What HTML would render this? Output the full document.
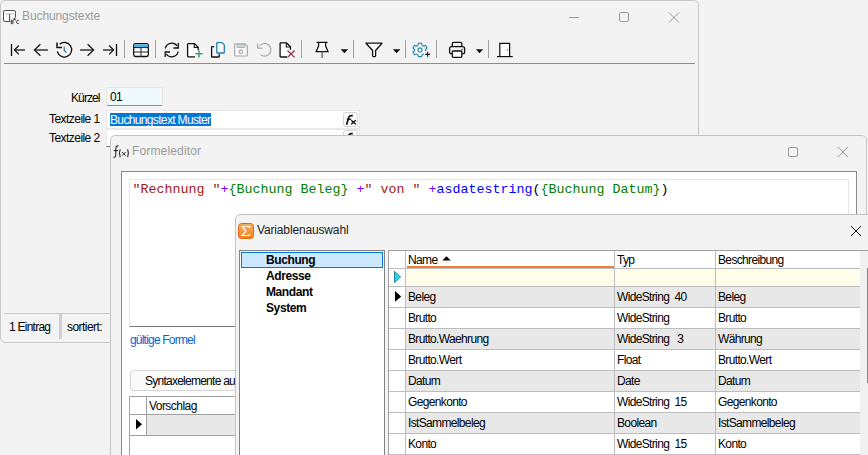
<!DOCTYPE html>
<html><head><meta charset="utf-8">
<style>
*{box-sizing:border-box;margin:0;padding:0}
html,body{width:868px;height:455px;overflow:hidden;background:#f3f3f3;font-family:"Liberation Sans",sans-serif;letter-spacing:-0.55px;color:#000;font-size:12px}
.a{position:absolute}
.t{position:absolute;white-space:pre;line-height:1}
svg{position:absolute;overflow:visible}
#w1{left:0;top:0;width:699px;height:343px;border:1px solid #c8c8c8;border-radius:5px;background:#f3f3f3}
#w2{left:110px;top:135px;width:757px;height:340px;border:1px solid #c4c4c4;border-radius:5px;background:#f3f3f3}
#w3{left:235px;top:214px;width:650px;height:260px;border:1px solid #c4c4c4;border-radius:5px;background:#f3f3f3}
</style></head><body>
<!-- Window 1: Buchungstexte -->
<div id="w1" class="a"></div>
<div class="t" style="left:22px;top:10px;font-size:12px;letter-spacing:-0.1px;color:#9a9a9a">Buchungstexte</div>
<!-- TOOLBAR -->
<svg style="left:0;top:0" width="700" height="70" viewBox="0 0 700 70">
<!-- window icon -->
<rect x="3.5" y="10.5" width="12" height="11" rx="1.5" fill="#fff" stroke="#505050" stroke-width="1"/>
<line x1="5" y1="14" x2="14" y2="14" stroke="#b8b8b8" stroke-width="1"/>
<line x1="9.5" y1="14" x2="9.5" y2="21" stroke="#505050" stroke-width="1"/>
<path d="M10.2 22 L10.2 25 L16.2 25 L16.2 17.6 L10.2 17.6 Z" fill="#f3f3f3"/>
<g fill="none" stroke="#333" stroke-width="0.9">
<path d="M11.2 20.3 L11.2 23.6 L12.4 23.6 Q13.3 23.6 13.3 22.8 Q13.3 22 12.3 22 L11.2 22 M11.2 20.3 L12.2 20.3 Q13 20.3 13 21.1 Q13 21.9 12.2 21.9"/>
<path d="M13.6 20.4 L14.5 17.8 L15.4 20.4 M13.9 19.6 L15.1 19.6"/>
<path d="M19.1 20.8 Q18.7 20.2 17.9 20.2 Q16.6 20.2 16.6 21.9 Q16.6 23.6 17.9 23.6 Q18.7 23.6 19.1 23"/>
</g>
<!-- title buttons -->
<line x1="569" y1="17.5" x2="579" y2="17.5" stroke="#9a9a9a" stroke-width="1"/>
<rect x="619.5" y="12.5" width="9" height="9" rx="1.5" fill="none" stroke="#9a9a9a" stroke-width="1"/>
<path d="M669 12.5 L679 22.5 M679 12.5 L669 22.5" stroke="#9a9a9a" stroke-width="1"/>
<!-- first -->
<line x1="11.5" y1="44" x2="11.5" y2="56" stroke="#111" stroke-width="1.3"/>
<line x1="15" y1="50" x2="25" y2="50" stroke="#555" stroke-width="1.8"/>
<path d="M18.8 45.5 L14.5 50 L18.8 54.3" fill="none" stroke="#111" stroke-width="1.2"/>
<!-- prev -->
<line x1="35" y1="50" x2="48" y2="50" stroke="#555" stroke-width="1.8"/>
<path d="M40.4 44.2 L34.4 50 L40.4 55.7" fill="none" stroke="#111" stroke-width="1.2"/>
<!-- history -->
<path d="M59.6 44.2 A7.3 7.3 0 1 1 57.3 51.5" fill="none" stroke="#111" stroke-width="1.3"/>
<path d="M57 42.6 L57 47.6 L62 47.6" fill="none" stroke="#111" stroke-width="1.5"/>
<path d="M64.2 46.4 L64.2 50.2 L66.4 52.6" fill="none" stroke="#2a6a90" stroke-width="1.2"/>
<!-- next -->
<line x1="80" y1="50" x2="93" y2="50" stroke="#555" stroke-width="1.8"/>
<path d="M87.6 44.2 L93.6 50 L87.6 55.7" fill="none" stroke="#111" stroke-width="1.2"/>
<!-- last -->
<line x1="103" y1="50" x2="113" y2="50" stroke="#555" stroke-width="1.8"/>
<path d="M109.2 45.5 L113.5 50 L109.2 54.3" fill="none" stroke="#111" stroke-width="1.2"/>
<line x1="116.5" y1="44" x2="116.5" y2="56" stroke="#111" stroke-width="1.3"/>
<!-- separators -->
<g stroke="#a0a0a0" stroke-width="1">
<line x1="124.5" y1="40" x2="124.5" y2="58"/>
<line x1="155.5" y1="40" x2="155.5" y2="58"/>
<line x1="301.5" y1="40" x2="301.5" y2="58"/>
<line x1="353.5" y1="40" x2="353.5" y2="58"/>
<line x1="405.5" y1="40" x2="405.5" y2="58"/>
<line x1="436.5" y1="40" x2="436.5" y2="58"/>
<line x1="488.5" y1="40" x2="488.5" y2="58"/>
</g>
<!-- table -->
<rect x="133.7" y="43.7" width="14.6" height="12.8" rx="1.8" fill="#fff" stroke="#111" stroke-width="1.3"/>
<rect x="134.4" y="44.4" width="13.2" height="3" fill="#40b4ec"/>
<line x1="134" y1="47.6" x2="148" y2="47.6" stroke="#111" stroke-width="1"/>
<line x1="134" y1="52" x2="148" y2="52" stroke="#444" stroke-width="1.2"/>
<line x1="141" y1="47.6" x2="141" y2="56.5" stroke="#444" stroke-width="1.2"/>
<!-- refresh -->
<path d="M165.3 48.5 A6.6 6.6 0 0 1 177.2 46" fill="none" stroke="#111" stroke-width="1.3"/>
<path d="M178.3 43 L178.3 48 L173.5 48" fill="none" stroke="#111" stroke-width="1.3"/>
<path d="M178.2 51.5 A6.6 6.6 0 0 1 166.3 54" fill="none" stroke="#111" stroke-width="1.3"/>
<path d="M165.2 57 L165.2 52 L170 52" fill="none" stroke="#111" stroke-width="1.3"/>
<!-- new doc -->
<path d="M198.2 50 L198.2 47.3 L194.5 43.6 L188.6 43.6 Q187.6 43.6 187.6 44.6 L187.6 55.9 Q187.6 56.9 188.6 56.9 L195 56.9" fill="#fff" stroke="#111" stroke-width="1.3"/>
<path d="M194.3 43.8 L194.3 47.5 L198 47.5" fill="none" stroke="#111" stroke-width="1.1"/>
<path d="M199 50.2 L199 57.4 M195.3 53.8 L202.7 53.8" stroke="#4a9a70" stroke-width="1.5"/>
<!-- copy -->
<path d="M214 46.7 L212.2 46.7 Q211.6 46.7 211.6 47.3 L211.6 56.4 Q211.6 57 212.2 57 L218.6 57 Q219.2 57 219.2 56.4 L219.2 54" fill="none" stroke="#111" stroke-width="1.3"/>
<path d="M217.4 42.6 L222 42.6 L224.3 44.9 L224.3 52.4 Q224.3 53 223.7 53 L217.4 53 Q216.8 53 216.8 52.4 L216.8 43.2 Q216.8 42.6 217.4 42.6 Z" fill="#fff" stroke="#1a7fb0" stroke-width="1.3"/>
<!-- save (disabled) -->
<path d="M235 43.8 L245 43.8 L247.4 46.2 L247.4 55.6 Q247.4 56 247 56 L235 56 Q234.6 56 234.6 55.6 L234.6 44.2 Q234.6 43.8 235 43.8 Z" fill="#f6f6f6" stroke="#a8a8a8" stroke-width="1.1"/>
<rect x="237.2" y="44.2" width="7.6" height="3.2" fill="#c8d8e0" stroke="#a8a8a8" stroke-width="0.8"/>
<circle cx="240.9" cy="51.8" r="1.7" fill="none" stroke="#a8a8a8" stroke-width="1.1"/>
<!-- undo (disabled) -->
<path d="M259.8 45.6 A6.3 6.3 0 1 1 260.5 54.6" fill="none" stroke="#a8a8a8" stroke-width="1.2"/>
<path d="M257.6 43.4 L257.6 48.2 L262.4 48.2" fill="none" stroke="#a8a8a8" stroke-width="1.2"/>
<!-- delete doc -->
<path d="M290.4 49.8 L290.4 46.8 L286.5 42.9 L280.9 42.9 Q280.1 42.9 280.1 43.7 L280.1 56.2 Q280.1 57 280.9 57 L287 57" fill="#fff" stroke="#111" stroke-width="1.3"/>
<path d="M286.3 43.1 L286.3 47 L290.2 47" fill="none" stroke="#111" stroke-width="1.1"/>
<path d="M287.5 50.5 L294.6 57.4 M294.6 50.5 L287.5 57.4" stroke="#8a2a4a" stroke-width="1.2"/>
<!-- pin -->
<path d="M316.6 42.4 L327.6 42.4 M318.6 42.4 L318.6 46 L316.2 51.6 L328 51.6 L325.6 46 L325.6 42.4" fill="#fff" stroke="#111" stroke-width="1.3"/>
<line x1="322.1" y1="51.8" x2="322.1" y2="58" stroke="#666" stroke-width="1.4"/>
<path d="M340.6 49.3 L348.2 49.3 L344.4 53.2 Z" fill="#111"/>
<!-- filter -->
<path d="M366 43.2 L382 43.2 L375.6 50.5 L375.6 55.8 Q375.6 56.6 374.8 56.6 L373.4 56.6 Q372.6 56.6 372.6 55.8 L372.6 50.5 Z" fill="#fff" stroke="#111" stroke-width="1.3" stroke-linejoin="round"/>
<path d="M392.9 49.3 L400.3 49.3 L396.6 53.2 Z" fill="#111"/>
<!-- gear -->
<g transform="translate(420,50)">
<path d="M-1.6 -6.6 L1.6 -6.6 L2.1 -4.6 L3.6 -3.8 L5.5 -4.6 L7 -2 L5.5 -0.6 L5.5 0.8 L7 2.2 L5.5 4.8 L3.6 4 L2.1 4.8 L1.6 6.6 L-1.6 6.6 L-2.1 4.8 L-3.6 4 L-5.5 4.8 L-7 2.2 L-5.5 0.8 L-5.5 -0.6 L-7 -2 L-5.5 -4.6 L-3.6 -3.8 L-2.1 -4.6 Z" fill="#fff" stroke="#2a88b8" stroke-width="1.2" stroke-linejoin="round"/>
<circle cx="0" cy="0" r="2.1" fill="none" stroke="#2a88b8" stroke-width="1.2"/>
</g>
<rect x="424" y="51" width="7" height="7" fill="#f3f3f3"/>
<path d="M427.6 51.8 L427.6 56.8 M425.1 54.3 L430.1 54.3" stroke="#222" stroke-width="1.2"/>
<!-- printer -->
<path d="M452.3 46.6 L452.3 43.6 Q452.3 42.4 453.5 42.4 L460.6 42.4 Q461.8 42.4 461.8 43.6 L461.8 46.6" fill="none" stroke="#111" stroke-width="1.3"/>
<path d="M452 53.6 L450.6 53.6 Q449.6 53.6 449.6 52.6 L449.6 48.6 Q449.6 46.6 451.6 46.6 L462.6 46.6 Q464.6 46.6 464.6 48.6 L464.6 52.6 Q464.6 53.6 463.6 53.6 L462 53.6" fill="none" stroke="#111" stroke-width="1.3"/>
<rect x="452.3" y="51" width="9.5" height="6.3" rx="0.8" fill="#fff" stroke="#111" stroke-width="1.3"/>
<circle cx="462.2" cy="49.2" r="0.6" fill="#111"/>
<path d="M475.8 49.3 L483.2 49.3 L479.5 53.2 Z" fill="#111"/>
<!-- door -->
<path d="M499.8 56.5 L499.8 43.4 L509.6 43.4 L509.6 56.5" fill="#fff" stroke="#111" stroke-width="1.2"/>
<line x1="497" y1="56.6" x2="512.8" y2="56.6" stroke="#111" stroke-width="1.2"/>
<circle cx="507.5" cy="50" r="0.6" fill="#111"/>
</svg>
<!-- /TOOLBAR -->
<div class="a" style="left:4px;top:63px;width:691px;height:1px;background:#8c8c8c"></div>
<div class="t" style="left:71px;top:92px;letter-spacing:-0.9px">Kürzel</div>
<div class="t" style="left:49px;top:113px;">Textzeile 1</div>
<div class="t" style="left:49px;top:132px;">Textzeile 2</div>
<div class="a" style="left:106px;top:87px;width:57px;height:19px;background:#f0f9fe;border:1px solid #e6e6e6;border-bottom:1px solid #8c8c8c;border-radius:2px"></div>
<div class="t" style="left:110px;top:91px;">01</div>
<div class="a" style="left:106px;top:110px;width:254px;height:19px;background:#fff;border:1px solid #e8e8e8"></div>
<div class="a" style="left:110px;top:113px;width:101px;height:13px;background:#0078d7"></div>
<div class="t" style="left:110px;top:114px;color:#fff;letter-spacing:-0.65px">Buchungstext Muster</div>
<div class="a" style="left:106px;top:129px;width:254px;height:18px;background:#fff;border:1px solid #e8e8e8;border-bottom-color:#707070"></div>
<div class="a" style="left:343px;top:112px;width:15px;height:15px;background:#fff;border:1px solid #d4d4d4;border-radius:3px"></div>
<svg style="left:340px;top:110px" width="20" height="40"><g fill="none" stroke="#111">
<path d="M6.5 14.8 L9 6.8 Q9.5 5.6 11 5.6 L12.8 5.6" stroke-width="1.7"/><path d="M6.8 9.2 L11.2 9.2" stroke-width="1.4"/>
<path d="M11.2 10.2 L15.8 14.2 M15.8 10.2 L11.2 14.2" stroke-width="1.4"/></g></svg>
<div class="a" style="left:343px;top:130px;width:15px;height:15px;background:#fff;border:1px solid #d4d4d4;border-radius:3px"></div>
<svg style="left:340px;top:128px" width="20" height="20"><g fill="none" stroke="#111">
<path d="M6.5 14.8 L9 6.8 Q9.5 5.6 11 5.6 L12.8 5.6" stroke-width="1.7"/><path d="M6.8 9.2 L11.2 9.2" stroke-width="1.4"/></g></svg>

<div class="a" style="left:4px;top:313px;width:107px;height:1px;background:#c8c8c8"></div>
<div class="t" style="left:9px;top:321px;letter-spacing:-0.75px">1 Eintrag</div>
<div class="a" style="left:59px;top:314px;width:3px;height:25px;background:#d0d0d0"></div>
<div class="t" style="left:67px;top:321px;">sortiert:</div>

<!-- Window 2: Formeleditor -->
<div id="w2" class="a"></div>
<div class="t" style="left:132px;top:145px;font-size:12px;letter-spacing:0.15px;color:#9a9a9a">Formeleditor</div>
<svg style="left:108px;top:140px" width="30" height="22"><g fill="none" stroke="#2a2a2a" stroke-width="1.1">
<path d="M10.4 6.2 Q9.2 5.4 8.3 6.6 Q7.8 7.4 7.8 9 L7.8 15 Q7.8 17.2 5.4 17.6"/>
<path d="M5.6 10.6 L10 10.6"/>
<path d="M12.2 9.2 Q10.6 13 12.2 17.2"/>
<path d="M14 12 L17.6 15.6 M17.6 12 L14 15.6" stroke-width="1"/>
<path d="M19.6 9.2 Q21.2 13 19.6 17.2"/>
</g></svg>
<svg style="left:0;top:0" width="868" height="250">
<rect x="788.5" y="147.5" width="9" height="9" rx="1.5" fill="none" stroke="#9a9a9a" stroke-width="1"/>
<path d="M838 147 L848 157 M848 147 L838 157" stroke="#9a9a9a" stroke-width="1"/>
</svg>

<div class="a" style="left:121px;top:171px;width:736px;height:300px;background:#fff;border:1px solid #8a8a8a"></div>
<div class="a" style="left:129px;top:179px;width:720px;height:148px;background:#fff;border:1px solid #e6e6e6;border-bottom-color:#777"></div>
<div class="t" style="left:132.6px;top:183px;font-family:'Liberation Mono',monospace;font-size:13.33px;letter-spacing:0;color:#a31515">"Rechnung "<span style="color:#8000ff">+</span><span style="color:#008000">{Buchung Beleg}</span> <span style="color:#8000ff">+</span>" von " <span style="color:#8000ff">+</span><span style="color:#0000ff">asdatestring</span><span style="color:#000">(</span><span style="color:#008000">{Buchung Datum}</span><span style="color:#000">)</span></div>
<div class="t" style="left:130px;top:334px;color:#0a64d0;letter-spacing:-0.8px">gültige Formel</div>
<div class="a" style="left:130px;top:370px;width:140px;height:21px;background:#fafafa;border:1px solid #d4d4d4;border-radius:4px"></div>
<div class="t" style="left:145px;top:375px;letter-spacing:-0.75px">Syntaxelemente auf</div>
<div class="a" style="left:129px;top:396px;width:120px;height:70px;background:#fff;border:1px solid #a0a0a0"></div>
<div class="a" style="left:146px;top:397px;width:1px;height:38px;background:#a0a0a0"></div>
<div class="a" style="left:130px;top:414px;width:110px;height:1px;background:#a0a0a0"></div>
<div class="a" style="left:147px;top:415px;width:93px;height:20px;background:#e8e8e8"></div>
<div class="a" style="left:130px;top:435px;width:110px;height:1px;background:#a0a0a0"></div>
<svg style="left:136px;top:419px" width="7" height="11"><path d="M0 0 L6 5.25 L0 10.5Z" fill="#000"/></svg>
<div class="t" style="left:149px;top:400px;">Vorschlag</div>

<!-- Window 3: Variablenauswahl -->
<div id="w3" class="a"></div>
<div class="t" style="left:257px;top:224px;font-size:12px;letter-spacing:-0.15px;color:#1a1a1a">Variablenauswahl</div>
<svg style="left:0;top:0" width="868" height="250">
<path d="M851 226 L861 236 M861 226 L851 236" stroke="#1a1a1a" stroke-width="1"/>
<defs><linearGradient id="og" x1="0" y1="0" x2="0" y2="1"><stop offset="0" stop-color="#fbb060"/><stop offset="1" stop-color="#f08020"/></linearGradient></defs>
<rect x="238.5" y="223.5" width="15" height="15" rx="3" fill="url(#og)" stroke="#e06810" stroke-width="1"/>
<path d="M242 226.5 L249.5 226.5 L249.5 228 M242 226.5 L246 231 L242 235.5 L249.5 235.5 L249.5 234" fill="none" stroke="#fff" stroke-width="1.2"/>
</svg>
<div class="a" style="left:239px;top:250px;width:146px;height:210px;background:#fff;border:1px solid #828282"></div>
<div class="a" style="left:241px;top:252px;width:142px;height:16px;background:#cce8ff;border:1px solid #0078d7"></div>
<div class="t" style="left:266px;top:254px;font-weight:bold;letter-spacing:-0.4px;font-size:12px">Buchung</div>
<div class="t" style="left:266px;top:270px;font-weight:bold;letter-spacing:-0.4px;font-size:12px">Adresse</div>
<div class="t" style="left:266px;top:286px;font-weight:bold;letter-spacing:-0.4px;font-size:12px">Mandant</div>
<div class="t" style="left:266px;top:302px;font-weight:bold;letter-spacing:-0.4px;font-size:12px">System</div>
<!-- GRID -->
<div class="a" style="left:388px;top:250px;width:480px;height:210px;background:#fff;border-left:1px solid #a0a0a0;border-top:1px solid #a0a0a0"></div>
<div class="a" style="left:860px;top:251px;width:8px;height:210px;background:#f0f0f0"></div>
<div class="a" style="left:867px;top:268px;width:2px;height:115px;background:#888"></div>
<div class="t" style="left:408px;top:254px;letter-spacing:-0.65px">Name</div>
<svg style="left:442px;top:255.5px" width="9" height="5"><path d="M0.3 4.5 L4.5 0.3 L8.7 4.5Z" fill="#000"/></svg>
<div class="a" style="left:407px;top:266px;width:207px;height:2px;background:#f47c3c"></div>
<div class="t" style="left:617px;top:254px;letter-spacing:-0.65px">Typ</div>
<div class="t" style="left:718px;top:254px;letter-spacing:-0.65px">Beschreibung</div>
<div class="a" style="left:389px;top:268px;width:471px;height:1px;background:#bdbdbd"></div>
<div class="a" style="left:406px;top:269px;width:454px;height:17px;background:#fdfdea"></div>
<div class="a" style="left:389px;top:286px;width:471px;height:1px;background:#bdbdbd"></div>
<div class="a" style="left:406px;top:287px;width:454px;height:20px;background:#e8e8e8"></div>
<div class="a" style="left:389px;top:307px;width:471px;height:1px;background:#bdbdbd"></div>
<div class="t" style="left:408px;top:291px;letter-spacing:-0.65px">Beleg</div>
<div class="t" style="left:617px;top:291px;letter-spacing:-0.65px">WideString  40</div>
<div class="t" style="left:718px;top:291px;letter-spacing:-0.65px">Beleg</div>
<div class="a" style="left:389px;top:328px;width:471px;height:1px;background:#bdbdbd"></div>
<div class="t" style="left:408px;top:312px;letter-spacing:-0.65px">Brutto</div>
<div class="t" style="left:617px;top:312px;letter-spacing:-0.65px">WideString</div>
<div class="t" style="left:718px;top:312px;letter-spacing:-0.65px">Brutto</div>
<div class="a" style="left:406px;top:329px;width:454px;height:20px;background:#e8e8e8"></div>
<div class="a" style="left:389px;top:349px;width:471px;height:1px;background:#bdbdbd"></div>
<div class="t" style="left:408px;top:333px;letter-spacing:-0.65px">Brutto.Waehrung</div>
<div class="t" style="left:617px;top:333px;letter-spacing:-0.65px">WideString   3</div>
<div class="t" style="left:718px;top:333px;letter-spacing:-0.65px">Währung</div>
<div class="a" style="left:389px;top:370px;width:471px;height:1px;background:#bdbdbd"></div>
<div class="t" style="left:408px;top:354px;letter-spacing:-0.65px">Brutto.Wert</div>
<div class="t" style="left:617px;top:354px;letter-spacing:-0.65px">Float</div>
<div class="t" style="left:718px;top:354px;letter-spacing:-0.65px">Brutto.Wert</div>
<div class="a" style="left:406px;top:371px;width:454px;height:20px;background:#e8e8e8"></div>
<div class="a" style="left:389px;top:391px;width:471px;height:1px;background:#bdbdbd"></div>
<div class="t" style="left:408px;top:375px;letter-spacing:-0.65px">Datum</div>
<div class="t" style="left:617px;top:375px;letter-spacing:-0.65px">Date</div>
<div class="t" style="left:718px;top:375px;letter-spacing:-0.65px">Datum</div>
<div class="a" style="left:389px;top:412px;width:471px;height:1px;background:#bdbdbd"></div>
<div class="t" style="left:408px;top:396px;letter-spacing:-0.65px">Gegenkonto</div>
<div class="t" style="left:617px;top:396px;letter-spacing:-0.65px">WideString  15</div>
<div class="t" style="left:718px;top:396px;letter-spacing:-0.65px">Gegenkonto</div>
<div class="a" style="left:406px;top:413px;width:454px;height:20px;background:#e8e8e8"></div>
<div class="a" style="left:389px;top:433px;width:471px;height:1px;background:#bdbdbd"></div>
<div class="t" style="left:408px;top:417px;letter-spacing:-0.65px">IstSammelbeleg</div>
<div class="t" style="left:617px;top:417px;letter-spacing:-0.65px">Boolean</div>
<div class="t" style="left:718px;top:417px;letter-spacing:-0.65px">IstSammelbeleg</div>
<div class="a" style="left:389px;top:454px;width:471px;height:1px;background:#bdbdbd"></div>
<div class="t" style="left:408px;top:438px;letter-spacing:-0.65px">Konto</div>
<div class="t" style="left:617px;top:438px;letter-spacing:-0.65px">WideString  15</div>
<div class="t" style="left:718px;top:438px;letter-spacing:-0.65px">Konto</div>
<div class="a" style="left:405px;top:251px;width:1px;height:210px;background:#bdbdbd"></div>
<div class="a" style="left:614px;top:251px;width:1px;height:210px;background:#bdbdbd"></div>
<div class="a" style="left:715px;top:251px;width:1px;height:210px;background:#bdbdbd"></div>
<svg style="left:394px;top:271px" width="8" height="12"><path d="M0.5 0.4 L6.6 5.9 L0.5 11.5Z" fill="#28d4e6" stroke="#1a7a8a" stroke-width="0.9" stroke-linejoin="round"/></svg>
<svg style="left:395px;top:291px" width="8" height="12"><path d="M0 0 L6.2 5.4 L0 10.8Z" fill="#000"/></svg>
<!-- /GRID -->
</body></html>
